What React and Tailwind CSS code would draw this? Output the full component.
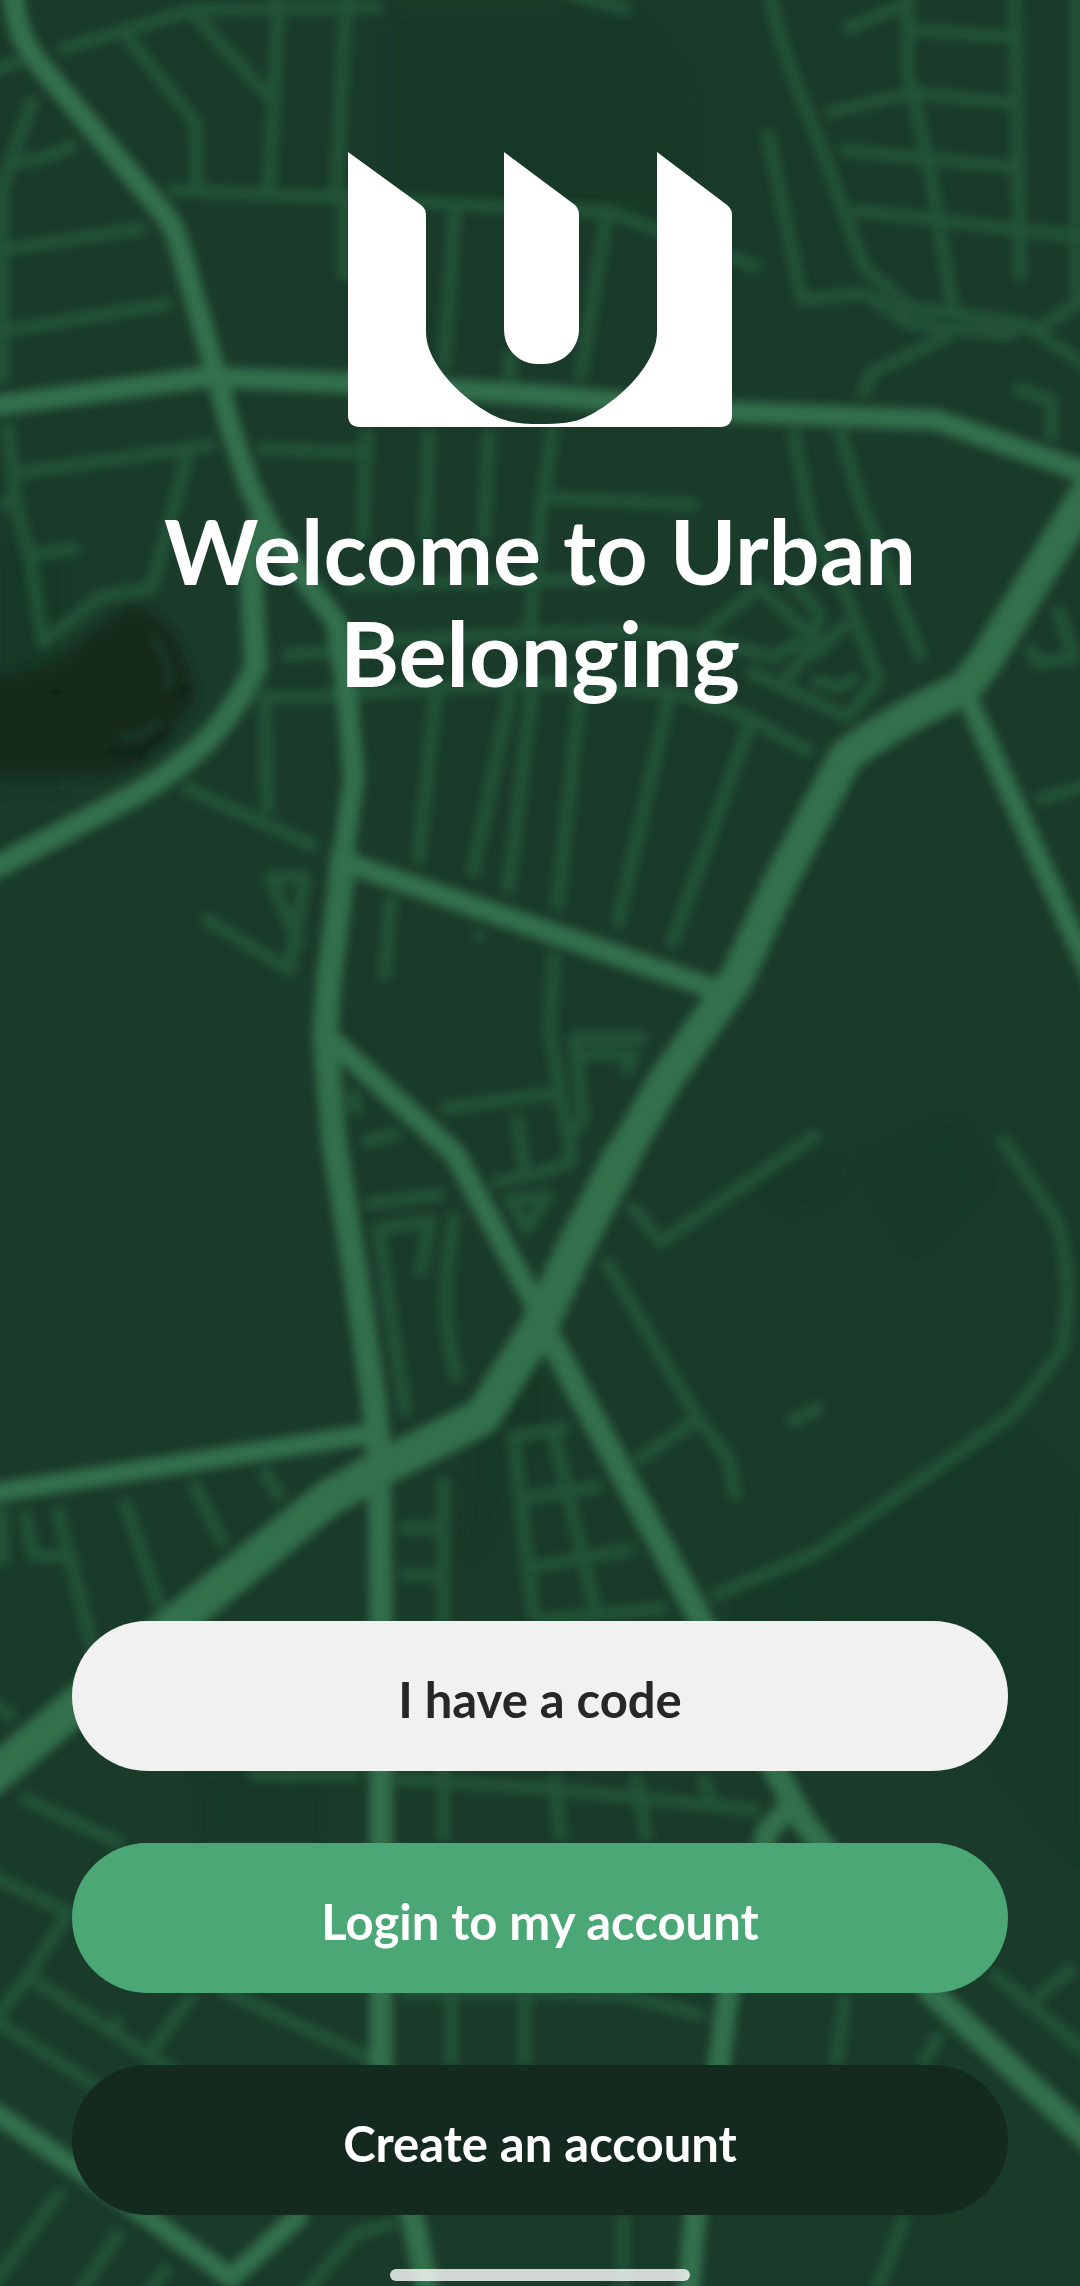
const parks = [
  'M390 20H640L690 90V200H390Z',
  'M864 1162L953 1120L985 1183L915 1250Z',
  'M765 1185L845 1165L835 1190L790 1210Z',
  'M1012 1430L1080 1500V1860L900 1640L740 1610Z',
  'M0 560H60V790H0Z',
  'M200 1780H320V1840H200Z',
  'M480 1400L540 1340V1420L470 1560Z',
];

const minorRoads = [
  'M-20 74L0 68L20 62M59 50L193 10L382 7M560 -10L600 2L630 10',
  'M124 33L196 123L197 190M193 13L269 97M279 -20V0L269 190M346 -20V0L336 197',
  'M169 190L348 198L500 207L609 212L760 268',
  'M34 97L10 163L0 200M10 163Q50 160 76 143',
  'M-20 253L145 228M-20 335L172 303M2 200V383',
  'M344 200V280M455 207L444 370M510 380V350M607 213L580 380',
  'M17 473L214 445M258 448L365 453',
  'M7 423L15 500L31 563L43 643L100 597L152 588L188 453M0 505L15 500M31 555L79 548',
  'M367 430L362 540M429 430L425 540M489 430L484 540M553 427L540 520L529 635',
  'M768 -20L771 0Q784 60 816 133L864 267L908 307L1022 323L1095 371M1030 333L1095 293',
  'M767 130L802 300L864 293L908 323L1005 335L1030 323',
  'M843 30L905 5M908 -20V0L907 67L933 187L953 310M1015 -20V0L1020 280M1077 -20V303',
  'M912 30L1015 37M826 113L912 93L1015 103M840 150L1015 167M853 210L1100 239',
  'M953 333L871 373L862 397M1015 388L1051 400V440',
  'M793 430L812 530L847 597L878 680L847 717L747 670M840 430L860 500L922 660',
  'M540 497L698 505M344 585L540 580L616 580',
  'M282 655L331 652L396 640L540 633L643 632L695 637L774 657L802 640',
  'M702 633L760 587L815 640M788 577L819 613L812 647L785 680M847 623L812 657M812 680L840 687L857 677',
  'M258 697L317 697L396 690L540 683L678 693L747 717L812 753',
  'M265 700L267 813M183 787L317 847M436 693L418 863M510 693L472 877M532 690L508 893',
  'M580 693L557 910M669 697L617 927M750 723L671 947M391 897L384 980M479 932V940',
  'M203 917L289 970L305 877H270L300 947',
  'M554 953L550 1032L568 1137M647 1038H574L583 1120L569 1137L571 1162L540 1173L492 1183M583 1055H633L626 1074',
  'M441 1109L540 1095H557M362 1143L400 1133M352 1090L358 1115M365 1204L444 1194M517 1116L525 1175',
  'M406 1415L389 1305L379 1229L430 1221L420 1276M455 1213Q436 1310 458 1381M510 1200L527 1229L547 1196Z',
  'M630 1204L661 1242L819 1133M605 1259L698 1419L728 1457L736 1499M698 1419L636 1461',
  'M1001 1137L1057 1221Q1074 1276 1062 1351L1012 1415L816 1553L712 1596M788 1423L822 1406',
  'M513 1431L534 1620M513 1437L568 1427M554 1436L598 1620M520 1499L602 1486M527 1568L633 1549M537 1620L667 1608',
  'M443 1478V1841M400 1528H443M400 1575H443',
  'M262 1469L282 1499M193 1482L224 1545M124 1499L160 1608M57 1507L93 1650M24 1511L34 1556H65M2 1507V1566',
  'M-14 1699L14 1718M21 1797L124 1845M-20 1870L69 1913L28 1976L-10 2025M28 1976L148 2055L193 1994M148 2055L178 2075M112 2028L120 2018',
  'M-20 2011L96 2086M220 1989L372 2059M250 1775H360M289 1775V1784M396 1779L540 1788L760 1810',
  'M554 1775L561 1841M636 1775L647 1841M702 1775L712 1801',
  'M400 1992H540L630 1996L705 2016M451 1990V2065M525 1990V2065',
  'M845 1994L836 2065M940 2033L922 2065M991 1972L1095 2059M1036 1998L1074 1967',
  'M623 2215V2310M905 2215L870 2310M62 2190L-10 2288M121 2230L68 2310M169 2265L140 2305M396 2223L355 2234L290 2310',
  'M1036 800L1100 782M1057 607L1074 657L1039 663L1029 647',
];

const majorRoads = [
  { d: 'M10 -30L16 15Q20 40 40 65L155 203Q172 222 177 237L215 370L231 430L250 487L272 533L310 587L337 623L346 687L354 777L344 850', w: 21 },
  { d: 'M-30 410L0 405L207 377L348 383L540 395L733 412L936 420L1100 477', w: 21 },
  { d: 'M262 520L250 557L256 667Q230 720 200 747Q170 775 138 793L0 865L-30 880', w: 23 },
  { d: 'M344 850L339 900L329 980L325 1035L334 1141L355 1271L374 1402L379 1460', w: 25 },
  { d: 'M379 1460L381 1620V2065L412 2215L434 2320', w: 23 },
  { d: 'M347 863L540 929L715 989', w: 21 },
  { d: 'M326 1035L455 1154L537 1308', w: 21 },
  { d: 'M543 1325L695 1609L778 1775L802 1819L933 1994L1100 2150', w: 24 },
  { d: 'M795 1800L767 1832L728 1993L719 2065L695 2215L686 2320', w: 22 },
  { d: 'M964 690L1100 995', w: 20 },
  { d: 'M-30 1497L0 1492L375 1433', w: 20 },
  { d: 'M-30 2099L0 2116L131 2205L231 2278L303 2212', w: 20 },
  { d: 'M1104 465L1057 543L988 657L964 689Q900 716 846 756L781 880L737 978L667 1078L619 1162L574 1250', w: 34 },
  { d: 'M625 1150L574 1250L540 1325L482 1417L379 1469L327 1499L179 1620L72 1709L-30 1795', w: 37 },
];

function StreetMap() {
  return (
    <svg
      className="absolute inset-0 h-full w-full"
      viewBox="0 0 1080 2286"
      preserveAspectRatio="xMidYMid slice"
      fill="none"
      aria-hidden="true"
    >
      <defs>
        <filter id="soft" x="-40" y="-40" width="1160" height="2366" filterUnits="userSpaceOnUse">
          <feGaussianBlur stdDeviation="5" />
        </filter>
        <filter id="haze" x="-40" y="-40" width="1160" height="2366" filterUnits="userSpaceOnUse">
          <feGaussianBlur stdDeviation="7" />
        </filter>
      </defs>
      <g filter="url(#haze)" fill="#173727">
        {parks.map((d) => <path key={d} d={d} />)}
      </g>
      <g filter="url(#soft)">
        <path
          d="M-20 675Q40 675 65 655L131 603Q160 615 175 635L190 668L196 700L170 735L140 765L100 777H-20Z"
          fill="#14291e"
        />
        <path d="M150 635Q175 665 168 690M120 738Q145 738 160 720" stroke="#173526" strokeWidth="8" />
        <path d="M50 692h12M176 700L186 685M108 750Q145 762 168 730" stroke="#102318" strokeWidth="8" />
        <g stroke="#205238" strokeWidth="13" strokeLinejoin="round">
          {minorRoads.map((d) => <path key={d} d={d} />)}
        </g>
        <g stroke="#316f4c" strokeLinejoin="round">
          {majorRoads.map(({ d, w }) => <path key={d} d={d} strokeWidth={w} />)}
        </g>
      </g>
    </svg>
  );
}

function Logo() {
  return (
    <svg className="w-[384px]" viewBox="0 0 384 275" fill="#fff" role="img" aria-label="Urban Belonging">
      <path d="M0 0L73 53Q78 57 78 63V180C78 215 122 253 149 265C162 271 175 272 193 272C212 272 225 271 238 265C265 253 309 215 309 180V0L379 53Q384 57 384 63V263Q384 275 372 275H12Q0 275 0 263Z" />
      <path d="M156 0L227 53Q231 57 231 63V177C231 195 217 212 195 212H190C170 212 156 197 156 177Z" />
    </svg>
  );
}

const actions = [
  { label: 'I have a code', style: 'bg-[#f1f1f1] text-[#272727]' },
  { label: 'Login to my account', style: 'bg-[#4ba776] text-white' },
  { label: 'Create an account', style: 'bg-[#142a1e] text-white' },
];

export default function App() {
  return (
    <main className="relative flex min-h-screen flex-col items-center overflow-hidden bg-[#1a3a2a] px-[72px] pt-[152px] pb-[5px] font-['Lato',sans-serif]">
      <StreetMap />
      <header className="relative flex flex-col items-center gap-[72px]">
        <Logo />
        <h1 className="text-center text-[90px] leading-[102px] font-bold text-white">
          Welcome to Urban Belonging
        </h1>
      </header>
      <div className="relative mt-auto flex w-full flex-col gap-[72px] pt-[72px]">
        {actions.map(({ label, style }) => (
          <button
            key={label}
            type="button"
            className={`h-[150px] w-full cursor-pointer rounded-[75px] pt-1.5 text-[49px] leading-[60px] font-bold ${style}`}
          >
            {label}
          </button>
        ))}
      </div>
      <div className="relative mt-[54px] h-3 w-[300px] rounded-full bg-white/80" />
    </main>
  );
}
